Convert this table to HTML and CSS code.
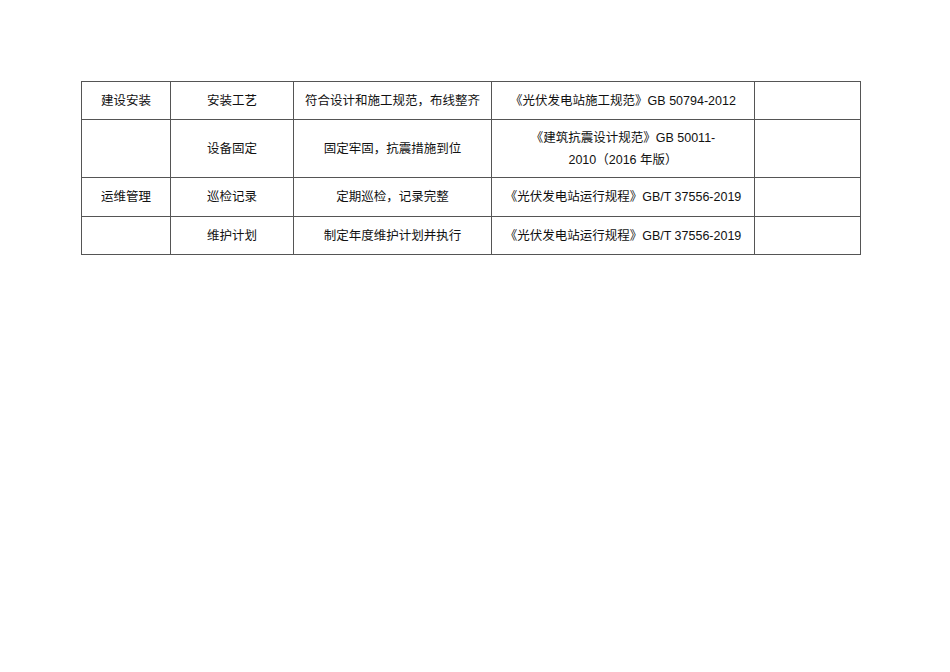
FILE: index.html
```html
<!DOCTYPE html>
<html lang="zh-CN">
<head>
<meta charset="utf-8">
<title>光伏发电站检查表</title>
<link rel="stylesheet" href="styles.css">
</head>
<body>
<table class="spec">
  <colgroup>
    <col class="c1"><col class="c2"><col class="c3"><col class="c4"><col class="c5">
  </colgroup>
  <tbody>
    <tr class="r1">
      <td>建设安装</td>
      <td>安装工艺</td>
      <td>符合设计和施工规范，布线整齐</td>
      <td>《光伏发电站施工规范》GB 50794-2012</td>
      <td></td>
    </tr>
    <tr class="r2">
      <td></td>
      <td>设备固定</td>
      <td>固定牢固，抗震措施到位</td>
      <td>《建筑抗震设计规范》GB 50011-<br>2010（2016 年版）</td>
      <td></td>
    </tr>
    <tr class="r3">
      <td>运维管理</td>
      <td>巡检记录</td>
      <td>定期巡检，记录完整</td>
      <td>《光伏发电站运行规程》GB/T 37556-2019</td>
      <td></td>
    </tr>
    <tr class="r4">
      <td></td>
      <td>维护计划</td>
      <td>制定年度维护计划并执行</td>
      <td>《光伏发电站运行规程》GB/T 37556-2019</td>
      <td></td>
    </tr>
  </tbody>
</table>
</body>
</html>
```
FILE: styles.css
```css
html, body {
  margin: 0;
  padding: 0;
  background: #fff;
}
body {
  font-family: "Liberation Sans", "Noto Sans CJK SC", sans-serif;
  font-size: 12.5px;
  color: #111;
}
.spec {
  border-collapse: collapse;
  table-layout: fixed;
  width: 779px;
  margin: 81px 0 0 81px;
}
.spec col.c1 { width: 89px; }
.spec col.c2 { width: 123px; }
.spec col.c3 { width: 198px; }
.spec col.c4 { width: 263px; }
.spec col.c5 { width: 106px; }
.spec td {
  border: 1px solid #555;
  text-align: center;
  vertical-align: middle;
  padding: 0 4px;
  line-height: 22px;
  text-spacing-trim: space-all;
}
.spec tr.r1 td { height: 37px; }
.spec tr.r2 td { height: 57px; }
.spec tr.r3 td { height: 38px; }
.spec tr.r4 td { height: 37px; }
```
